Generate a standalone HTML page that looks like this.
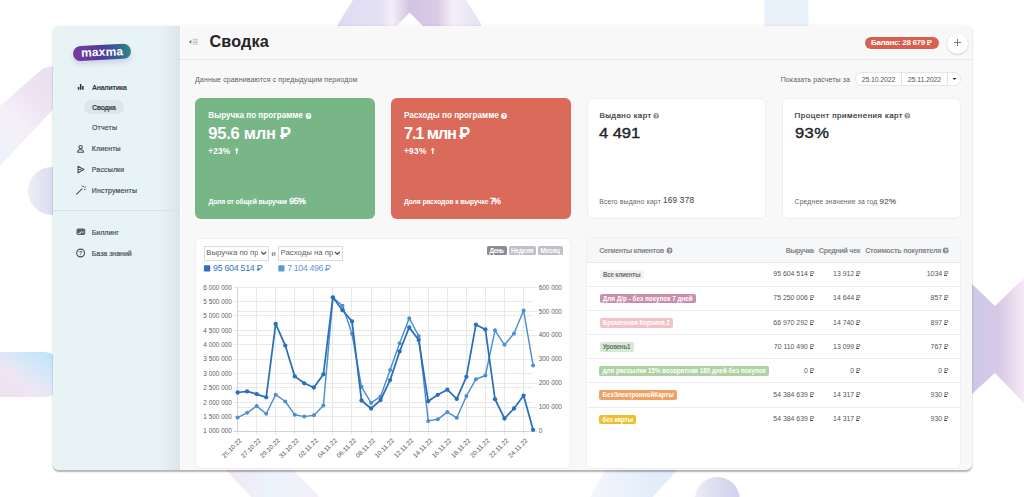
<!DOCTYPE html>
<html><head><meta charset="utf-8">
<style>
*{box-sizing:border-box;margin:0;padding:0}
html,body{width:1024px;height:497px;overflow:hidden;background:#fff;font-family:"Liberation Sans",sans-serif}
body{position:relative}
.a{position:absolute}
.t{position:absolute;white-space:nowrap}
#frame{position:absolute;left:53px;top:26px;width:919px;height:444px;border-radius:6px;overflow:hidden;background:#f8f8f8;box-shadow:0 1.5px 1.5px rgba(0,0,0,.28),0 0 4px rgba(0,0,0,.06)}
.card{position:absolute;border-radius:6px}
.rub{position:relative}
.rub::after{content:"";position:absolute;left:0.0em;width:0.4em;top:0.725em;height:0.085em;background:currentColor}
.ax{font-family:"Liberation Sans",sans-serif;font-size:6.4px;fill:#5c5c5c}
</style></head><body>
<!-- background decorations -->
<svg class="a" style="left:0;top:0" width="1024" height="497" viewBox="0 0 1024 497">
<defs>
<linearGradient id="gTop" x1="0" x2="1" y1="0" y2="0">
<stop offset="0" stop-color="#dcdcf2"/><stop offset=".3" stop-color="#e6e2f4"/><stop offset=".38" stop-color="#f3eef9"/><stop offset=".5" stop-color="#d3c3e3"/><stop offset=".7" stop-color="#dccbe6"/><stop offset=".8" stop-color="#f5eff9"/><stop offset="1" stop-color="#e0e2f4"/>
</linearGradient>
<linearGradient id="gBand" x1="0" x2="0.6" y1="1" y2="0">
<stop offset="0" stop-color="#eef2fb"/><stop offset=".45" stop-color="#f5f0f8"/><stop offset=".75" stop-color="#eee4f2"/><stop offset="1" stop-color="#e9e1f1"/>
</linearGradient>
<linearGradient id="gBand2" x1="0" x2="1" y1="1" y2="0">
<stop offset="0" stop-color="#f2e0ef"/><stop offset=".45" stop-color="#ece6f4"/><stop offset=".75" stop-color="#cfe8f9"/><stop offset="1" stop-color="#bfe1f8"/>
</linearGradient>
<linearGradient id="gCirc" x1="0" x2="1" y1="0" y2="0">
<stop offset="0" stop-color="#eeedf7"/><stop offset=".5" stop-color="#dcdcf1"/><stop offset="1" stop-color="#cfd1ec"/>
</linearGradient>
<linearGradient id="gBow" x1="0" x2="1" y1="0" y2="0">
<stop offset="0" stop-color="#cdc8e8"/><stop offset=".5" stop-color="#d6c9e6"/><stop offset=".8" stop-color="#eadbef"/><stop offset="1" stop-color="#f4e9f5"/>
</linearGradient>
<linearGradient id="gRect" x1="0" x2="0" y1="0" y2="1">
<stop offset="0" stop-color="#e7f3fb"/><stop offset=".7" stop-color="#e9f1fa"/><stop offset="1" stop-color="#eeedf8"/>
</linearGradient>
<linearGradient id="gBand3" x1="0" x2="1" y1="0" y2="0">
<stop offset="0" stop-color="#f3e6f3"/><stop offset=".5" stop-color="#ebf4fb"/><stop offset="1" stop-color="#f6eef8"/>
</linearGradient>
<linearGradient id="gBand4" x1="0" x2="1" y1="0" y2="0">
<stop offset="0" stop-color="#f4f7fc"/><stop offset=".6" stop-color="#e4eefa"/><stop offset="1" stop-color="#e2edfa"/>
</linearGradient>
</defs>
<path d="M353,0 L466,0 L480.5,23 Q482.5,27 479,27 L424,27 L409.5,12.5 L395.5,27 L340,27 Q336.5,27 338.5,23 Z" fill="url(#gTop)"/>
<rect x="764.5" y="0" width="44" height="27" fill="url(#gRect)"/>
<path d="M0,106 L41,70 Q45,66.5 52,66.5 L58,66.5 L58,104 L0,166 Z" fill="url(#gBand)"/>
<circle cx="52" cy="191" r="24" fill="url(#gCirc)"/>
<path d="M-10,352 L45,352 Q55,352 55,362 L55,387 Q55,397 45,397 L-10,397 Z" fill="url(#gBand2)"/>
<path d="M972,284 L995,306 L1024,278 L1024,403 L995,373 L972,394 Z" fill="url(#gBow)"/>
<path d="M222,466 L290,466 L322,500 L254,500 Z" fill="url(#gBand3)"/>
<path d="M608,466 L681,466 L650,500 L596,500 Q588,500 592,492 Z" fill="url(#gBand4)"/>
<circle cx="717.3" cy="499.5" r="22.5" fill="url(#gCirc)"/>
</svg>

<div id="frame">
  <div class="a" style="left:0;top:0;width:127px;height:444px;background:#e8f3f5"></div>
  <div class="a" style="left:107px;top:0;width:20px;height:444px;background:linear-gradient(90deg,rgba(215,228,232,0),rgba(214,226,230,.55) 65%,rgba(210,223,228,.7))"></div>
  <div class="a" style="left:127px;top:0;width:1px;height:444px;background:#fdfdfd"></div>
</div>

<div class="a" style="left:0;top:0;width:1024px;height:470px;overflow:hidden">
<!-- logo -->
<div class="a" style="left:73.3px;top:45.3px;width:57.6px;height:15px;border-radius:7.5px;background:linear-gradient(90deg,#7b3aa1,#4c3b9b 50%,#3a5b98 75%,#2a8a84);transform:rotate(-3deg);box-shadow:0 3px 5px rgba(90,80,170,.22),0 0 0 .6px rgba(255,255,255,.7)"></div>
<div class="t" style="left:81px;top:45px;font-size:12px;line-height:15px;font-weight:bold;color:#fff;transform:rotate(-2deg);letter-spacing:.2px">maxma</div>

<!-- sidebar pill -->
<div class="a" style="left:84px;top:100.2px;width:40px;height:14.3px;border-radius:7px;background:#dde6e9"></div>
<!-- sidebar divider -->
<div class="a" style="left:53px;top:210px;width:127px;height:1px;background:#d8e3e6"></div>

<!-- header -->
<div class="a" style="left:180px;top:59px;width:792px;height:1px;background:#e6e8ea"></div>
<div class="a" style="left:865px;top:36.6px;width:74px;height:12.4px;border-radius:6.2px;background:#d9604f"></div>
<div class="a" style="left:947px;top:33px;width:20.5px;height:20.5px;border-radius:50%;background:#fff;box-shadow:0 0.5px 1.5px rgba(0,0,0,.25)"></div>
<div class="a" style="left:954px;top:42px;width:7px;height:1px;background:#7a7a7a"></div>
<div class="a" style="left:957px;top:39px;width:1px;height:7px;background:#7a7a7a"></div>

<!-- date control -->
<div class="a" style="left:855px;top:72.2px;width:106px;height:13.6px;border-radius:6.8px;background:#fff;border:0.8px solid #e6e6e6"></div>
<div class="a" style="left:901.3px;top:73px;width:.8px;height:12px;background:#e2e2e2"></div>
<div class="a" style="left:947.4px;top:73px;width:.8px;height:12px;background:#e2e2e2"></div>
<svg class="a" style="left:951px;top:76px" width="8" height="6"><path d="M1.6,1.9 L5.4,1.9 L3.5,4 Z" fill="#222"/></svg>

<!-- cards -->
<div class="card" style="left:195px;top:98px;width:180px;height:120.7px;background:#78b688"></div>
<div class="card" style="left:390.6px;top:98px;width:180.4px;height:120.7px;background:#da6a5a"></div>
<div class="card" style="left:586.6px;top:98px;width:179px;height:120.7px;background:#fff;border:0.8px solid #efefef"></div>
<div class="card" style="left:782px;top:98px;width:179.2px;height:120.7px;background:#fff;border:0.8px solid #efefef"></div>

<div class="card" style="left:195px;top:237.6px;width:375.8px;height:231px;background:#fff;border:0.8px solid #efefef"></div>
<div class="card" style="left:586.2px;top:237.4px;width:374.8px;height:231.2px;background:#fff;border:0.8px solid #efefef;overflow:hidden">
  <div class="a" style="left:0;top:0;width:374px;height:25px;background:#f6f7f9;border-bottom:0.8px solid #e8e9ec"></div>
</div>

<svg class="a" style="left:0;top:0" width="1024" height="497" viewBox="0 0 1024 497">
<line x1="233.6" y1="287.5" x2="533.1" y2="287.5" stroke="#e9e9e9" stroke-width="1"/>
<line x1="233.6" y1="301.5" x2="533.1" y2="301.5" stroke="#e9e9e9" stroke-width="1"/>
<line x1="233.6" y1="315.5" x2="533.1" y2="315.5" stroke="#e9e9e9" stroke-width="1"/>
<line x1="233.6" y1="330.5" x2="533.1" y2="330.5" stroke="#e9e9e9" stroke-width="1"/>
<line x1="233.6" y1="344.5" x2="533.1" y2="344.5" stroke="#e9e9e9" stroke-width="1"/>
<line x1="233.6" y1="359.5" x2="533.1" y2="359.5" stroke="#e9e9e9" stroke-width="1"/>
<line x1="233.6" y1="373.5" x2="533.1" y2="373.5" stroke="#e9e9e9" stroke-width="1"/>
<line x1="233.6" y1="387.5" x2="533.1" y2="387.5" stroke="#e9e9e9" stroke-width="1"/>
<line x1="233.6" y1="402.5" x2="533.1" y2="402.5" stroke="#e9e9e9" stroke-width="1"/>
<line x1="233.6" y1="416.5" x2="533.1" y2="416.5" stroke="#e9e9e9" stroke-width="1"/>
<line x1="233.6" y1="431.5" x2="533.1" y2="431.5" stroke="#e9e9e9" stroke-width="1"/>
<line x1="237.6" y1="287.5" x2="537.1" y2="287.5" stroke="#e9e9e9" stroke-width="1"/>
<line x1="237.6" y1="311.5" x2="537.1" y2="311.5" stroke="#e9e9e9" stroke-width="1"/>
<line x1="237.6" y1="335.5" x2="537.1" y2="335.5" stroke="#e9e9e9" stroke-width="1"/>
<line x1="237.6" y1="359.5" x2="537.1" y2="359.5" stroke="#e9e9e9" stroke-width="1"/>
<line x1="237.6" y1="383.5" x2="537.1" y2="383.5" stroke="#e9e9e9" stroke-width="1"/>
<line x1="237.6" y1="407.5" x2="537.1" y2="407.5" stroke="#e9e9e9" stroke-width="1"/>
<line x1="237.6" y1="431.5" x2="537.1" y2="431.5" stroke="#e9e9e9" stroke-width="1"/>
<line x1="237.5" y1="287.2" x2="237.5" y2="435.0" stroke="#e9e9e9" stroke-width="1"/>
<line x1="256.5" y1="287.2" x2="256.5" y2="435.0" stroke="#e9e9e9" stroke-width="1"/>
<line x1="275.5" y1="287.2" x2="275.5" y2="435.0" stroke="#e9e9e9" stroke-width="1"/>
<line x1="294.5" y1="287.2" x2="294.5" y2="435.0" stroke="#e9e9e9" stroke-width="1"/>
<line x1="313.5" y1="287.2" x2="313.5" y2="435.0" stroke="#e9e9e9" stroke-width="1"/>
<line x1="332.5" y1="287.2" x2="332.5" y2="435.0" stroke="#e9e9e9" stroke-width="1"/>
<line x1="351.5" y1="287.2" x2="351.5" y2="435.0" stroke="#e9e9e9" stroke-width="1"/>
<line x1="371.5" y1="287.2" x2="371.5" y2="435.0" stroke="#e9e9e9" stroke-width="1"/>
<line x1="390.5" y1="287.2" x2="390.5" y2="435.0" stroke="#e9e9e9" stroke-width="1"/>
<line x1="409.5" y1="287.2" x2="409.5" y2="435.0" stroke="#e9e9e9" stroke-width="1"/>
<line x1="428.5" y1="287.2" x2="428.5" y2="435.0" stroke="#e9e9e9" stroke-width="1"/>
<line x1="447.5" y1="287.2" x2="447.5" y2="435.0" stroke="#e9e9e9" stroke-width="1"/>
<line x1="466.5" y1="287.2" x2="466.5" y2="435.0" stroke="#e9e9e9" stroke-width="1"/>
<line x1="485.5" y1="287.2" x2="485.5" y2="435.0" stroke="#e9e9e9" stroke-width="1"/>
<line x1="504.5" y1="287.2" x2="504.5" y2="435.0" stroke="#e9e9e9" stroke-width="1"/>
<line x1="523.5" y1="287.2" x2="523.5" y2="435.0" stroke="#e9e9e9" stroke-width="1"/>
<line x1="237.5" y1="287.2" x2="237.5" y2="431.0" stroke="#d4d4d4" stroke-width="1"/>
<line x1="233.6" y1="431.5" x2="537.1" y2="431.5" stroke="#d4d4d4" stroke-width="1"/>
<text x="231.8" y="289.5" text-anchor="end" class="ax">6 000 000</text>
<text x="231.8" y="303.9" text-anchor="end" class="ax">5 500 000</text>
<text x="231.8" y="318.3" text-anchor="end" class="ax">5 000 000</text>
<text x="231.8" y="332.6" text-anchor="end" class="ax">4 500 000</text>
<text x="231.8" y="347.0" text-anchor="end" class="ax">4 000 000</text>
<text x="231.8" y="361.4" text-anchor="end" class="ax">3 500 000</text>
<text x="231.8" y="375.8" text-anchor="end" class="ax">3 000 000</text>
<text x="231.8" y="390.2" text-anchor="end" class="ax">2 500 000</text>
<text x="231.8" y="404.5" text-anchor="end" class="ax">2 000 000</text>
<text x="231.8" y="418.9" text-anchor="end" class="ax">1 500 000</text>
<text x="231.8" y="433.3" text-anchor="end" class="ax">1 000 000</text>
<text x="538.7" y="289.5" class="ax">600 000</text>
<text x="538.7" y="313.5" class="ax">500 000</text>
<text x="538.7" y="337.4" class="ax">400 000</text>
<text x="538.7" y="361.4" class="ax">300 000</text>
<text x="538.7" y="385.4" class="ax">200 000</text>
<text x="538.7" y="409.3" class="ax">100 000</text>
<text x="538.7" y="433.3" class="ax">0</text>
<text transform="translate(242.1,441.0) rotate(-45)" text-anchor="end" class="ax">25.10.22</text>
<text transform="translate(261.2,441.0) rotate(-45)" text-anchor="end" class="ax">27.10.22</text>
<text transform="translate(280.2,441.0) rotate(-45)" text-anchor="end" class="ax">29.10.22</text>
<text transform="translate(299.3,441.0) rotate(-45)" text-anchor="end" class="ax">31.10.22</text>
<text transform="translate(318.4,441.0) rotate(-45)" text-anchor="end" class="ax">02.11.22</text>
<text transform="translate(337.4,441.0) rotate(-45)" text-anchor="end" class="ax">04.11.22</text>
<text transform="translate(356.5,441.0) rotate(-45)" text-anchor="end" class="ax">06.11.22</text>
<text transform="translate(375.6,441.0) rotate(-45)" text-anchor="end" class="ax">08.11.22</text>
<text transform="translate(394.6,441.0) rotate(-45)" text-anchor="end" class="ax">10.11.22</text>
<text transform="translate(413.7,441.0) rotate(-45)" text-anchor="end" class="ax">12.11.22</text>
<text transform="translate(432.7,441.0) rotate(-45)" text-anchor="end" class="ax">14.11.22</text>
<text transform="translate(451.8,441.0) rotate(-45)" text-anchor="end" class="ax">16.11.22</text>
<text transform="translate(470.9,441.0) rotate(-45)" text-anchor="end" class="ax">18.11.22</text>
<text transform="translate(489.9,441.0) rotate(-45)" text-anchor="end" class="ax">20.11.22</text>
<text transform="translate(509.0,441.0) rotate(-45)" text-anchor="end" class="ax">22.11.22</text>
<text transform="translate(528.1,441.0) rotate(-45)" text-anchor="end" class="ax">24.11.22</text>
<polyline points="237.6,417.6 247.1,412.8 256.7,406.1 266.2,413.8 275.7,394.7 285.3,401.5 294.8,414.8 304.3,416.6 313.9,415.3 323.4,405.6 332.9,297.5 342.5,305.8 352.0,333.8 361.5,386.8 371.1,402.9 380.6,396.4 390.1,370.0 399.6,343.2 409.2,318.2 418.7,336.0 428.2,420.9 437.8,419.3 447.3,412.1 456.8,417.8 466.4,396.0 475.9,379.2 485.4,375.5 495.0,330.3 504.5,344.8 514.0,333.5 523.6,310.5 533.1,365.4" fill="none" stroke="#4c8fd1" stroke-width="1.45" stroke-linejoin="round"/>
<circle cx="237.6" cy="417.6" r="2.0" fill="#4c8fd1"/>
<circle cx="247.1" cy="412.8" r="2.0" fill="#4c8fd1"/>
<circle cx="256.7" cy="406.1" r="2.0" fill="#4c8fd1"/>
<circle cx="266.2" cy="413.8" r="2.0" fill="#4c8fd1"/>
<circle cx="275.7" cy="394.7" r="2.0" fill="#4c8fd1"/>
<circle cx="285.3" cy="401.5" r="2.0" fill="#4c8fd1"/>
<circle cx="294.8" cy="414.8" r="2.0" fill="#4c8fd1"/>
<circle cx="304.3" cy="416.6" r="2.0" fill="#4c8fd1"/>
<circle cx="313.9" cy="415.3" r="2.0" fill="#4c8fd1"/>
<circle cx="323.4" cy="405.6" r="2.0" fill="#4c8fd1"/>
<circle cx="332.9" cy="297.5" r="2.0" fill="#4c8fd1"/>
<circle cx="342.5" cy="305.8" r="2.0" fill="#4c8fd1"/>
<circle cx="352.0" cy="333.8" r="2.0" fill="#4c8fd1"/>
<circle cx="361.5" cy="386.8" r="2.0" fill="#4c8fd1"/>
<circle cx="371.1" cy="402.9" r="2.0" fill="#4c8fd1"/>
<circle cx="380.6" cy="396.4" r="2.0" fill="#4c8fd1"/>
<circle cx="390.1" cy="370.0" r="2.0" fill="#4c8fd1"/>
<circle cx="399.6" cy="343.2" r="2.0" fill="#4c8fd1"/>
<circle cx="409.2" cy="318.2" r="2.0" fill="#4c8fd1"/>
<circle cx="418.7" cy="336.0" r="2.0" fill="#4c8fd1"/>
<circle cx="428.2" cy="420.9" r="2.0" fill="#4c8fd1"/>
<circle cx="437.8" cy="419.3" r="2.0" fill="#4c8fd1"/>
<circle cx="447.3" cy="412.1" r="2.0" fill="#4c8fd1"/>
<circle cx="456.8" cy="417.8" r="2.0" fill="#4c8fd1"/>
<circle cx="466.4" cy="396.0" r="2.0" fill="#4c8fd1"/>
<circle cx="475.9" cy="379.2" r="2.0" fill="#4c8fd1"/>
<circle cx="485.4" cy="375.5" r="2.0" fill="#4c8fd1"/>
<circle cx="495.0" cy="330.3" r="2.0" fill="#4c8fd1"/>
<circle cx="504.5" cy="344.8" r="2.0" fill="#4c8fd1"/>
<circle cx="514.0" cy="333.5" r="2.0" fill="#4c8fd1"/>
<circle cx="523.6" cy="310.5" r="2.0" fill="#4c8fd1"/>
<circle cx="533.1" cy="365.4" r="2.0" fill="#4c8fd1"/>
<polyline points="237.6,392.5 247.1,391.4 256.7,394.1 266.2,397.3 275.7,323.9 285.3,345.6 294.8,376.4 304.3,383.3 313.9,387.5 323.4,374.3 332.9,297.3 342.5,310.2 352.0,321.4 361.5,400.5 371.1,408.5 380.6,400.1 390.1,380.1 399.6,351.5 409.2,327.4 418.7,340.0 428.2,401.3 437.8,394.8 447.3,389.7 456.8,398.9 466.4,376.8 475.9,324.7 485.4,329.5 495.0,399.2 504.5,418.5 514.0,408.5 523.6,395.6 533.1,429.8" fill="none" stroke="#2a6fbb" stroke-width="1.75" stroke-linejoin="round"/>
<circle cx="237.6" cy="392.5" r="2.15" fill="#2a6fbb"/>
<circle cx="247.1" cy="391.4" r="2.15" fill="#2a6fbb"/>
<circle cx="256.7" cy="394.1" r="2.15" fill="#2a6fbb"/>
<circle cx="266.2" cy="397.3" r="2.15" fill="#2a6fbb"/>
<circle cx="275.7" cy="323.9" r="2.15" fill="#2a6fbb"/>
<circle cx="285.3" cy="345.6" r="2.15" fill="#2a6fbb"/>
<circle cx="294.8" cy="376.4" r="2.15" fill="#2a6fbb"/>
<circle cx="304.3" cy="383.3" r="2.15" fill="#2a6fbb"/>
<circle cx="313.9" cy="387.5" r="2.15" fill="#2a6fbb"/>
<circle cx="323.4" cy="374.3" r="2.15" fill="#2a6fbb"/>
<circle cx="332.9" cy="297.3" r="2.15" fill="#2a6fbb"/>
<circle cx="342.5" cy="310.2" r="2.15" fill="#2a6fbb"/>
<circle cx="352.0" cy="321.4" r="2.15" fill="#2a6fbb"/>
<circle cx="361.5" cy="400.5" r="2.15" fill="#2a6fbb"/>
<circle cx="371.1" cy="408.5" r="2.15" fill="#2a6fbb"/>
<circle cx="380.6" cy="400.1" r="2.15" fill="#2a6fbb"/>
<circle cx="390.1" cy="380.1" r="2.15" fill="#2a6fbb"/>
<circle cx="399.6" cy="351.5" r="2.15" fill="#2a6fbb"/>
<circle cx="409.2" cy="327.4" r="2.15" fill="#2a6fbb"/>
<circle cx="418.7" cy="340.0" r="2.15" fill="#2a6fbb"/>
<circle cx="428.2" cy="401.3" r="2.15" fill="#2a6fbb"/>
<circle cx="437.8" cy="394.8" r="2.15" fill="#2a6fbb"/>
<circle cx="447.3" cy="389.7" r="2.15" fill="#2a6fbb"/>
<circle cx="456.8" cy="398.9" r="2.15" fill="#2a6fbb"/>
<circle cx="466.4" cy="376.8" r="2.15" fill="#2a6fbb"/>
<circle cx="475.9" cy="324.7" r="2.15" fill="#2a6fbb"/>
<circle cx="485.4" cy="329.5" r="2.15" fill="#2a6fbb"/>
<circle cx="495.0" cy="399.2" r="2.15" fill="#2a6fbb"/>
<circle cx="504.5" cy="418.5" r="2.15" fill="#2a6fbb"/>
<circle cx="514.0" cy="408.5" r="2.15" fill="#2a6fbb"/>
<circle cx="523.6" cy="395.6" r="2.15" fill="#2a6fbb"/>
<circle cx="533.1" cy="429.8" r="2.15" fill="#2a6fbb"/>
</svg>


<!-- sidebar icons -->
<svg class="a" style="left:0;top:0" width="200" height="270" viewBox="0 0 200 270">
<g fill="#2a2d35">
<rect x="77.8" y="87" width="1.5" height="2.8" rx=".5"/>
<rect x="79.9" y="84" width="1.5" height="5.8" rx=".5"/>
<rect x="82.1" y="86" width="1.5" height="3.8" rx=".5"/>
</g>
<g fill="none" stroke="#4b4f5b" stroke-width="1.1" stroke-linejoin="round" stroke-linecap="round">
<circle cx="80.6" cy="147.1" r="1.65"/>
<path d="M77.7,152.2 L78,150.9 Q78.4,149.7 79.6,149.7 L81.6,149.7 Q82.8,149.7 83.2,150.9 L83.5,152.2 Z"/>
<path d="M78,166.2 L83.9,169.5 L78,172.8 Z M78,169.5 L80.8,169.5"/>
<path d="M76.6,194.2 L82,188.8"/>
<circle cx="80.6" cy="253" r="3.9"/>
</g>
<g fill="#4b4f5b">
<circle cx="83.1" cy="186.5" r=".75"/><circle cx="85.1" cy="186.9" r=".6"/><circle cx="84.7" cy="189.5" r=".7"/><circle cx="81.6" cy="185.6" r=".45"/>
</g>
<rect x="76.5" y="228.5" width="8.7" height="6.4" rx="1.6" fill="#5d616b"/>
<path d="M77.8,233.4 L80.4,233.4 L80.4,232.1 L83.9,232.1" stroke="#e8f3f5" stroke-width=".8" fill="none"/>
<text x="80.6" y="255.3" text-anchor="middle" font-family="Liberation Sans" font-weight="bold" font-size="5.8" fill="#4b4f5b">?</text>
<!-- collapse icon -->
<path d="M188.8,41.8 L191.3,40 L191.3,43.7 Z" fill="#777"/>
<g stroke="#bbb" stroke-width=".9"><path d="M192.6,39.3 H197.8 M192.6,41 H197.8 M192.6,42.6 H197.8 M192.6,44.2 H197.8"/></g>
</svg>

<!-- chart controls -->
<div class="a" style="left:203.6px;top:245.8px;width:65.2px;height:15px;border:0.8px solid #dcdcdc;background:#fff"></div>
<div class="a" style="left:278px;top:245.8px;width:64.7px;height:15px;border:0.8px solid #dcdcdc;background:#fff"></div>
<svg class="a" style="left:0;top:0" width="600" height="300" viewBox="0 0 600 300">
<path d="M261.6,252.2 L263.7,254.2 L265.8,252.2 M335.2,252.2 L337.3,254.2 L339.4,252.2" stroke="#555" stroke-width="1.25" fill="none" stroke-linecap="round" stroke-linejoin="round"/>
<rect x="203.9" y="265.3" width="6.3" height="6.3" rx="1" fill="#2d71bd"/>
<rect x="278.3" y="265.3" width="6.2" height="6.3" rx="1" fill="#5d98d6"/>
</svg>
<div class="a" style="left:486.6px;top:246px;width:20.2px;height:9.1px;border-radius:1.5px;background:#8c8c96"></div>
<div class="a" style="left:508.8px;top:246px;width:27.1px;height:9.1px;border-radius:1.5px;background:#c0c0c6"></div>
<div class="a" style="left:538px;top:246px;width:24.5px;height:9.1px;border-radius:1.5px;background:#c0c0c6"></div>

<!-- help icons -->
<svg class="a" style="left:0;top:0" width="1024" height="300" viewBox="0 0 1024 300">
<g font-family="Liberation Sans" font-weight="bold" text-anchor="middle">
<circle cx="308.5" cy="116" r="2.9" fill="#fff"/><text x="308.5" y="118.1" font-size="5" fill="#78b688">?</text>
<circle cx="504" cy="116" r="2.9" fill="#fff"/><text x="504" y="118.1" font-size="5" fill="#da6a5a">?</text>
<circle cx="656.2" cy="115.7" r="2.8" fill="#8a8a8a"/><text x="656.2" y="117.8" font-size="5" fill="#fff">?</text>
<circle cx="907.3" cy="115.7" r="2.8" fill="#8a8a8a"/><text x="907.3" y="117.8" font-size="5" fill="#fff">?</text>
<circle cx="669.5" cy="250.5" r="2.9" fill="#888"/><text x="669.5" y="252.6" font-size="5" fill="#fff">?</text>
<circle cx="945.7" cy="250.5" r="2.9" fill="#888"/><text x="945.7" y="252.6" font-size="5" fill="#fff">?</text>
</g>
</svg>

<div class="t" style="left:91.90px;top:84.27px;font-size:7.0px;line-height:7.0px;letter-spacing:-0.250px;color:#33363f;font-weight:bold;">Аналитика</div>
<div class="t" style="left:91.90px;top:103.97px;font-size:7.0px;line-height:7.0px;letter-spacing:-0.248px;color:#33363f;font-weight:bold;">Сводка</div>
<div class="t" style="left:91.90px;top:123.87px;font-size:7.0px;line-height:7.0px;letter-spacing:0.183px;color:#4e525c;font-weight:normal;-webkit-text-stroke:0.2px #4e525c">Отчеты</div>
<div class="t" style="left:91.75px;top:145.27px;font-size:7.0px;line-height:7.0px;letter-spacing:0.113px;color:#4b4f5b;font-weight:normal;-webkit-text-stroke:0.2px #4b4f5b">Клиенты</div>
<div class="t" style="left:91.75px;top:165.87px;font-size:7.0px;line-height:7.0px;letter-spacing:0.153px;color:#4b4f5b;font-weight:normal;-webkit-text-stroke:0.2px #4b4f5b">Рассылки</div>
<div class="t" style="left:91.75px;top:187.17px;font-size:7.0px;line-height:7.0px;letter-spacing:0.160px;color:#4b4f5b;font-weight:normal;-webkit-text-stroke:0.2px #4b4f5b">Инструменты</div>
<div class="t" style="left:91.75px;top:228.67px;font-size:7.0px;line-height:7.0px;letter-spacing:-0.003px;color:#4b4f5b;font-weight:normal;-webkit-text-stroke:0.2px #4b4f5b">Биллинг</div>
<div class="t" style="left:91.75px;top:249.77px;font-size:7.0px;line-height:7.0px;letter-spacing:-0.011px;color:#4b4f5b;font-weight:normal;-webkit-text-stroke:0.2px #4b4f5b">База знаний</div>
<div class="t" style="left:209.40px;top:33.09px;font-size:16.2px;line-height:16.2px;letter-spacing:0.191px;color:#242424;font-weight:bold;">Сводка</div>
<div class="t" style="left:871.00px;top:39.03px;font-size:8px;line-height:8px;letter-spacing:-0.328px;color:#fff;font-weight:bold;">Баланс: 28 679 <span class="rub">Р</span></div>
<div class="t" style="left:195.00px;top:75.67px;font-size:7px;line-height:7px;letter-spacing:0.132px;color:#5e5e5e;font-weight:normal;">Данные сравниваются с предыдущим периодом</div>
<div class="t" style="left:780.70px;top:75.67px;font-size:7px;line-height:7px;letter-spacing:0.099px;color:#5e5e5e;font-weight:normal;">Показать расчеты за</div>
<div class="t" style="left:861.70px;top:75.87px;font-size:7.0px;line-height:7.0px;letter-spacing:-0.137px;color:#555;font-weight:normal;">25.10.2022</div>
<div class="t" style="left:907.80px;top:75.87px;font-size:7.0px;line-height:7.0px;letter-spacing:-0.123px;color:#555;font-weight:normal;">25.11.2022</div>
<div class="t" style="left:208.30px;top:111.86px;font-size:8.2px;line-height:8.2px;letter-spacing:-0.016px;color:#fff;font-weight:bold;">Выручка по программе</div>
<div class="t" style="left:208.30px;top:124.53px;font-size:16.5px;line-height:16.5px;letter-spacing:-0.253px;color:#fff;font-weight:bold;">95.6 млн <span class="rub">Р</span></div>
<div class="t" style="left:208.30px;top:146.97px;font-size:8.3px;line-height:8.3px;letter-spacing:0.115px;color:#fff;font-weight:bold;">+23%</div>
<svg class="a" style="left:234.2px;top:147px" width="6" height="8"><path d="M2.75,0.6 L0.8,3.3 L2.1,3.3 L2.1,7.1 L3.4,7.1 L3.4,3.3 L4.7,3.3 Z" fill="#fff"/></svg>
<div class="t" style="left:208.40px;top:198.64px;font-size:6.8px;line-height:6.8px;letter-spacing:-0.150px;color:#fff;font-weight:bold;">Доля от общей выручки</div>
<div class="t" style="left:289.30px;top:197.22px;font-size:8.6px;line-height:8.6px;letter-spacing:-0.350px;color:#fff;font-weight:normal;-webkit-text-stroke:0.35px #fff">95%</div>
<div class="t" style="left:403.90px;top:111.86px;font-size:8.2px;line-height:8.2px;letter-spacing:0.000px;color:#fff;font-weight:bold;">Расходы по программе</div>
<div class="t" style="left:403.90px;top:124.53px;font-size:16.5px;line-height:16.5px;letter-spacing:-1.192px;color:#fff;font-weight:bold;">7.1 млн <span class="rub">Р</span></div>
<div class="t" style="left:403.90px;top:146.97px;font-size:8.3px;line-height:8.3px;letter-spacing:0.315px;color:#fff;font-weight:bold;">+93%</div>
<svg class="a" style="left:430px;top:147px" width="6" height="8"><path d="M2.75,0.6 L0.8,3.3 L2.1,3.3 L2.1,7.1 L3.4,7.1 L3.4,3.3 L4.7,3.3 Z" fill="#fff"/></svg>
<div class="t" style="left:403.90px;top:198.64px;font-size:6.8px;line-height:6.8px;letter-spacing:-0.117px;color:#fff;font-weight:bold;">Доля расходов к выручке</div>
<div class="t" style="left:489.90px;top:197.22px;font-size:8.6px;line-height:8.6px;letter-spacing:-1.327px;color:#fff;font-weight:normal;-webkit-text-stroke:0.35px #fff">7%</div>
<div class="t" style="left:599.40px;top:111.83px;font-size:8px;line-height:8px;letter-spacing:0.434px;color:#333;font-weight:normal;-webkit-text-stroke:0.2px #333">Выдано карт</div>
<div class="t" style="left:599.40px;top:125.57px;font-size:14.8px;line-height:14.8px;letter-spacing:-0.050px;color:#262626;font-weight:normal;-webkit-text-stroke:0.4px #262626;transform:scaleX(1.12);transform-origin:0 0">4 491</div>
<div class="t" style="left:599.20px;top:198.64px;font-size:6.8px;line-height:6.8px;letter-spacing:0.159px;color:#666;font-weight:normal;">Всего выдано карт</div>
<div class="t" style="left:663.10px;top:197.46px;font-size:8.2px;line-height:8.2px;letter-spacing:0.209px;color:#505050;font-weight:normal;-webkit-text-stroke:0.12px #505050">169 378</div>
<div class="t" style="left:794.60px;top:111.83px;font-size:8px;line-height:8px;letter-spacing:0.474px;color:#333;font-weight:normal;-webkit-text-stroke:0.2px #333">Процент применения карт</div>
<div class="t" style="left:794.60px;top:125.57px;font-size:14.8px;line-height:14.8px;letter-spacing:0.334px;color:#262626;font-weight:normal;-webkit-text-stroke:0.4px #262626;transform:scaleX(1.12);transform-origin:0 0">93%</div>
<div class="t" style="left:794.60px;top:198.64px;font-size:6.8px;line-height:6.8px;letter-spacing:0.151px;color:#666;font-weight:normal;">Среднее значение за год</div>
<div class="t" style="left:879.40px;top:197.63px;font-size:8.0px;line-height:8.0px;letter-spacing:0.300px;color:#505050;font-weight:normal;-webkit-text-stroke:0.12px #505050">92%</div>
<div class="t" style="left:206.30px;top:249.40px;font-size:7.8px;line-height:7.8px;letter-spacing:0.000px;color:#626262;font-weight:normal;width:52px;overflow:hidden">Выручка по пр(</div>
<div class="t" style="left:271.60px;top:249.65px;font-size:7.5px;line-height:7.5px;letter-spacing:0.000px;color:#626262;font-weight:normal;">и</div>
<div class="t" style="left:280.60px;top:249.40px;font-size:7.8px;line-height:7.8px;letter-spacing:0.000px;color:#626262;font-weight:normal;width:52px;overflow:hidden">Расходы на пр(</div>
<div class="t" style="left:213.00px;top:264.05px;font-size:8.8px;line-height:8.8px;letter-spacing:-0.260px;color:#3276c2;font-weight:normal;">95 604 514 <span class="rub">Р</span></div>
<div class="t" style="left:287.20px;top:264.05px;font-size:8.8px;line-height:8.8px;letter-spacing:-0.368px;color:#5f9ad7;font-weight:normal;">7 104 496 <span class="rub">Р</span></div>
<div class="t" style="left:489.50px;top:247.78px;font-size:6.4px;line-height:6.4px;letter-spacing:-0.500px;color:#fff;font-weight:bold;">День</div>
<div class="t" style="left:511.00px;top:247.78px;font-size:6.4px;line-height:6.4px;letter-spacing:-0.223px;color:#fff;font-weight:bold;">Неделя</div>
<div class="t" style="left:540.50px;top:247.78px;font-size:6.4px;line-height:6.4px;letter-spacing:-0.133px;color:#fff;font-weight:bold;">Месяц</div>
<div class="a" style="left:599.8px;top:269.6px;width:44.0px;height:9.7px;border-radius:2px;background:#f1f2f4"></div>
<div class="t" style="left:603.00px;top:271.57px;font-size:6.3px;line-height:6.3px;letter-spacing:-0.259px;color:#707070;font-weight:bold;">Все клиенты</div>
<div class="a" style="left:599.5px;top:293.8px;width:96.5px;height:9.7px;border-radius:2px;background:#c98dad"></div>
<div class="t" style="left:602.70px;top:295.77px;font-size:6.3px;line-height:6.3px;letter-spacing:0.034px;color:#fff;font-weight:bold;">Для Д/р - без покупок 7 дней</div>
<div class="a" style="left:599.5px;top:318.0px;width:73.5px;height:9.7px;border-radius:2px;background:#f2c2c4"></div>
<div class="t" style="left:602.70px;top:319.97px;font-size:6.3px;line-height:6.3px;letter-spacing:-0.080px;color:#fff;font-weight:bold;">Брошенная Корзина 2</div>
<div class="a" style="left:599.5px;top:341.9px;width:34.2px;height:9.7px;border-radius:2px;background:#d5ead2"></div>
<div class="t" style="left:602.70px;top:343.87px;font-size:6.3px;line-height:6.3px;letter-spacing:-0.295px;color:#6e726e;font-weight:bold;">Уровень1</div>
<div class="a" style="left:599.4px;top:366.2px;width:169.6px;height:9.7px;border-radius:2px;background:#abd3a3"></div>
<div class="t" style="left:602.60px;top:368.17px;font-size:6.3px;line-height:6.3px;letter-spacing:-0.031px;color:#fff;font-weight:bold;">для рассылки 15% возвратная 180 дней без покупок</div>
<div class="a" style="left:599.4px;top:390.2px;width:77.6px;height:9.7px;border-radius:2px;background:#f0a264"></div>
<div class="t" style="left:602.60px;top:392.17px;font-size:6.3px;line-height:6.3px;letter-spacing:-0.034px;color:#fff;font-weight:bold;">БезЭлектроннойКарты</div>
<div class="a" style="left:599.4px;top:414.8px;width:36.9px;height:9.7px;border-radius:2px;background:#eebf2c"></div>
<div class="t" style="left:602.60px;top:416.77px;font-size:6.3px;line-height:6.3px;letter-spacing:-0.082px;color:#fff;font-weight:bold;">без карты</div>
<div class="a" style="left:587.6px;top:286.1px;width:373px;height:0.9px;background:#ececef"></div>
<div class="a" style="left:587.6px;top:309.90000000000003px;width:373px;height:0.9px;background:#ececef"></div>
<div class="a" style="left:587.6px;top:334.0px;width:373px;height:0.9px;background:#ececef"></div>
<div class="a" style="left:587.6px;top:357.90000000000003px;width:373px;height:0.9px;background:#ececef"></div>
<div class="a" style="left:587.6px;top:382.1px;width:373px;height:0.9px;background:#ececef"></div>
<div class="a" style="left:587.6px;top:406.6px;width:373px;height:0.9px;background:#ececef"></div>
<div class="t" style="left:599.20px;top:246.51px;font-size:7.2px;line-height:7.2px;letter-spacing:-0.365px;color:#858585;font-weight:bold;">Сегменты клиентов</div>
<div class="t" style="left:785.80px;top:246.51px;font-size:7.2px;line-height:7.2px;letter-spacing:-0.517px;color:#858585;font-weight:bold;">Выручка</div>
<div class="t" style="left:818.80px;top:246.51px;font-size:7.2px;line-height:7.2px;letter-spacing:-0.348px;color:#858585;font-weight:bold;">Средний чек</div>
<div class="t" style="left:865.20px;top:246.51px;font-size:7.2px;line-height:7.2px;letter-spacing:-0.293px;color:#858585;font-weight:bold;">Стоимость покупателя</div>
<div class="t" style="left:773.35px;top:271.36px;font-size:6.9px;line-height:6.9px;letter-spacing:0.000px;color:#555;font-weight:normal;">95 604 514 <span class="rub">Р</span></div>
<div class="t" style="left:833.07px;top:271.36px;font-size:6.9px;line-height:6.9px;letter-spacing:0.000px;color:#555;font-weight:normal;">13 912 <span class="rub">Р</span></div>
<div class="t" style="left:926.73px;top:271.36px;font-size:6.9px;line-height:6.9px;letter-spacing:0.000px;color:#555;font-weight:normal;">1034 <span class="rub">Р</span></div>
<div class="t" style="left:773.35px;top:295.46px;font-size:6.9px;line-height:6.9px;letter-spacing:0.000px;color:#555;font-weight:normal;">75 250 006 <span class="rub">Р</span></div>
<div class="t" style="left:833.07px;top:295.46px;font-size:6.9px;line-height:6.9px;letter-spacing:0.000px;color:#555;font-weight:normal;">14 644 <span class="rub">Р</span></div>
<div class="t" style="left:930.56px;top:295.46px;font-size:6.9px;line-height:6.9px;letter-spacing:0.000px;color:#555;font-weight:normal;">857 <span class="rub">Р</span></div>
<div class="t" style="left:773.35px;top:319.56px;font-size:6.9px;line-height:6.9px;letter-spacing:0.000px;color:#555;font-weight:normal;">66 970 292 <span class="rub">Р</span></div>
<div class="t" style="left:833.07px;top:319.56px;font-size:6.9px;line-height:6.9px;letter-spacing:0.000px;color:#555;font-weight:normal;">14 740 <span class="rub">Р</span></div>
<div class="t" style="left:930.56px;top:319.56px;font-size:6.9px;line-height:6.9px;letter-spacing:0.000px;color:#555;font-weight:normal;">897 <span class="rub">Р</span></div>
<div class="t" style="left:773.86px;top:343.66px;font-size:6.9px;line-height:6.9px;letter-spacing:0.000px;color:#555;font-weight:normal;">70 110 490 <span class="rub">Р</span></div>
<div class="t" style="left:833.07px;top:343.66px;font-size:6.9px;line-height:6.9px;letter-spacing:0.000px;color:#555;font-weight:normal;">13 099 <span class="rub">Р</span></div>
<div class="t" style="left:930.56px;top:343.66px;font-size:6.9px;line-height:6.9px;letter-spacing:0.000px;color:#555;font-weight:normal;">767 <span class="rub">Р</span></div>
<div class="t" style="left:804.05px;top:367.76px;font-size:6.9px;line-height:6.9px;letter-spacing:0.000px;color:#555;font-weight:normal;">0 <span class="rub">Р</span></div>
<div class="t" style="left:850.35px;top:367.76px;font-size:6.9px;line-height:6.9px;letter-spacing:0.000px;color:#555;font-weight:normal;">0 <span class="rub">Р</span></div>
<div class="t" style="left:938.25px;top:367.76px;font-size:6.9px;line-height:6.9px;letter-spacing:0.000px;color:#555;font-weight:normal;">0 <span class="rub">Р</span></div>
<div class="t" style="left:773.35px;top:391.86px;font-size:6.9px;line-height:6.9px;letter-spacing:0.000px;color:#555;font-weight:normal;">54 384 639 <span class="rub">Р</span></div>
<div class="t" style="left:833.07px;top:391.86px;font-size:6.9px;line-height:6.9px;letter-spacing:0.000px;color:#555;font-weight:normal;">14 317 <span class="rub">Р</span></div>
<div class="t" style="left:930.56px;top:391.86px;font-size:6.9px;line-height:6.9px;letter-spacing:0.000px;color:#555;font-weight:normal;">930 <span class="rub">Р</span></div>
<div class="t" style="left:773.35px;top:415.96px;font-size:6.9px;line-height:6.9px;letter-spacing:0.000px;color:#555;font-weight:normal;">54 384 639 <span class="rub">Р</span></div>
<div class="t" style="left:833.07px;top:415.96px;font-size:6.9px;line-height:6.9px;letter-spacing:0.000px;color:#555;font-weight:normal;">14 317 <span class="rub">Р</span></div>
<div class="t" style="left:930.56px;top:415.96px;font-size:6.9px;line-height:6.9px;letter-spacing:0.000px;color:#555;font-weight:normal;">930 <span class="rub">Р</span></div>
</div>
</body></html>
